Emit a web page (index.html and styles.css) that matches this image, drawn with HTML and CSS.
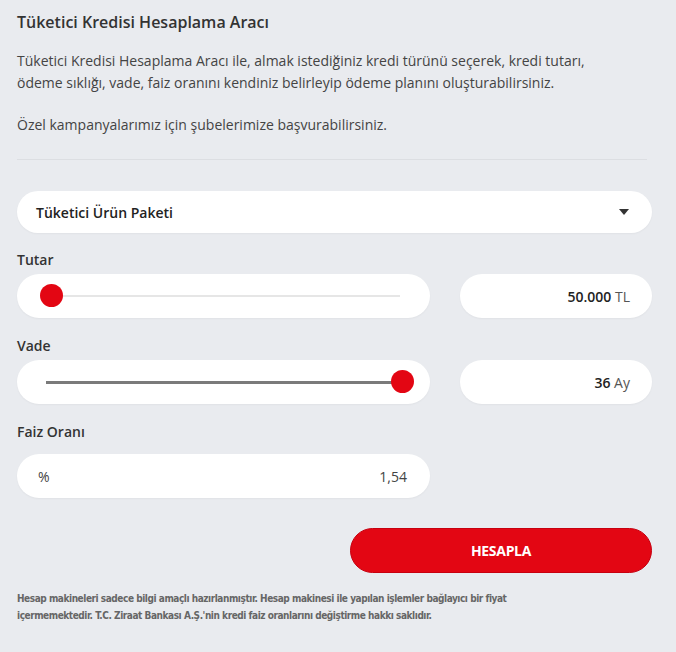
FILE: index.html
```html
<!DOCTYPE html>
<html lang="tr">
<head>
<meta charset="utf-8">
<link rel="stylesheet" href="styles.css">
</head>
<body>
<div class="calc">
  <h1 class="title">Tüketici Kredisi Hesaplama Aracı</h1>
  <p class="intro">Tüketici Kredisi Hesaplama Aracı ile, almak istediğiniz kredi türünü seçerek, kredi tutarı, ödeme sıklığı, vade, faiz oranını kendiniz belirleyip ödeme planını oluşturabilirsiniz.</p>
  <p class="intro note">Özel kampanyalarımız için şubelerimize başvurabilirsiniz.</p>
  <div class="divider"></div>

  <div class="select">
    <span>Tüketici Ürün Paketi</span>
    <span class="caret"></span>
  </div>

  <div class="label label-first">Tutar</div>
  <div class="row">
    <div class="box slider">
      <div class="track track-light"></div>
      <span class="thumb thumb-start"></span>
    </div>
    <div class="box value"><b>50.000</b>&nbsp;TL</div>
  </div>

  <div class="label">Vade</div>
  <div class="row">
    <div class="box slider">
      <div class="track track-dark"></div>
      <span class="thumb thumb-end"></span>
    </div>
    <div class="box value"><b>36</b>&nbsp;Ay</div>
  </div>

  <div class="label label-rate">Faiz Oranı</div>
  <div class="row">
    <div class="box rate"><span>%</span><span>1,54</span></div>
  </div>

  <div class="actions">
    <button class="btn">HESAPLA</button>
  </div>

  <p class="disclaimer">Hesap makineleri sadece bilgi amaçlı hazırlanmıştır. Hesap makinesi ile yapılan işlemler bağlayıcı bir fiyat içermemektedir. T.C. Ziraat Bankası A.Ş.'nin kredi faiz oranlarını değiştirme hakkı saklıdır.</p>
</div>
</body>
</html>
```

FILE: styles.css
```css
* { box-sizing: border-box; }
html, body { margin: 0; padding: 0; }
body {
  background: #e9ebef;
  font-family: "Open Sans", "Noto Sans", sans-serif;
  color: #333;
}
.calc {
  width: 676px;
  padding: 12px 24px 0 17px;
}
.title {
  margin: 0;
  font-size: 16px;
  line-height: 20px;
  font-weight: 600;
  color: #333;
}
.intro {
  margin: 18px 0 0;
  font-size: 14px;
  line-height: 22px;
  color: #444;
  width: 605px;
}
.note { margin-top: 20px; }
.divider {
  height: 1px;
  background: #dcdee2;
  margin: 23px 5px 31px 0;
}
.select {
  height: 42px;
  background: #fff;
  border-radius: 21px;
  display: flex;
  align-items: center;
  justify-content: space-between;
  padding: 0 23px 0 19px;
  font-size: 14px;
  font-weight: 600;
  color: #222;
  box-shadow: 0 1px 2px rgba(0,0,0,0.04);
}
.caret {
  width: 0; height: 0;
  border-left: 5px solid transparent;
  border-right: 5px solid transparent;
  border-top: 6px solid #333;
}
.label {
  margin: 18px 0 4px;
  font-size: 14px;
  line-height: 20px;
  font-weight: 600;
  color: #333;
}
.label-first { margin-top: 17px; }
.label-rate { margin-bottom: 12px; }
.row {
  display: grid;
  grid-template-columns: 413px 192px;
  column-gap: 30px;
}
.box {
  height: 44px;
  background: #fff;
  border-radius: 22px;
  box-shadow: 0 1px 2px rgba(0,0,0,0.04);
  display: flex;
  align-items: center;
}
.slider {
  position: relative;
  padding: 0 30px 0 29px;
}
.track { flex: 1; }
.track-light { height: 2px; background: #e6e6e6; }
.track-dark { height: 3px; background: #7a7a7a; }
.thumb {
  position: absolute;
  top: 10px;
  width: 23px; height: 23px;
  border-radius: 50%;
  background: #e30613;
}
.thumb-start { left: 23px; }
.thumb-end { right: 16px; }
.value {
  justify-content: flex-end;
  padding-right: 22px;
  font-size: 14px;
  color: #555;
}
.value b { color: #222; font-weight: 600; }
.rate {
  justify-content: space-between;
  padding: 0 23px 0 21px;
  font-size: 14px;
  color: #444;
}
.actions {
  display: flex;
  justify-content: flex-end;
  margin-top: 30px;
}
.btn {
  width: 302px;
  height: 45px;
  border-radius: 23px;
  border: 1px solid #c7000f;
  background: #e30613;
  color: #fff;
  font-family: "Open Sans", sans-serif;
  font-weight: 700;
  font-size: 14px;
  letter-spacing: -0.3px;
}
.disclaimer {
  margin: 17px 0 0;
  font-family: "DejaVu Sans Condensed", "DejaVu Sans", sans-serif;
  font-size: 10px;
  line-height: 17px;
  font-weight: 700;
  color: #666;
  width: 530px;
  letter-spacing: -0.45px;
}
```
